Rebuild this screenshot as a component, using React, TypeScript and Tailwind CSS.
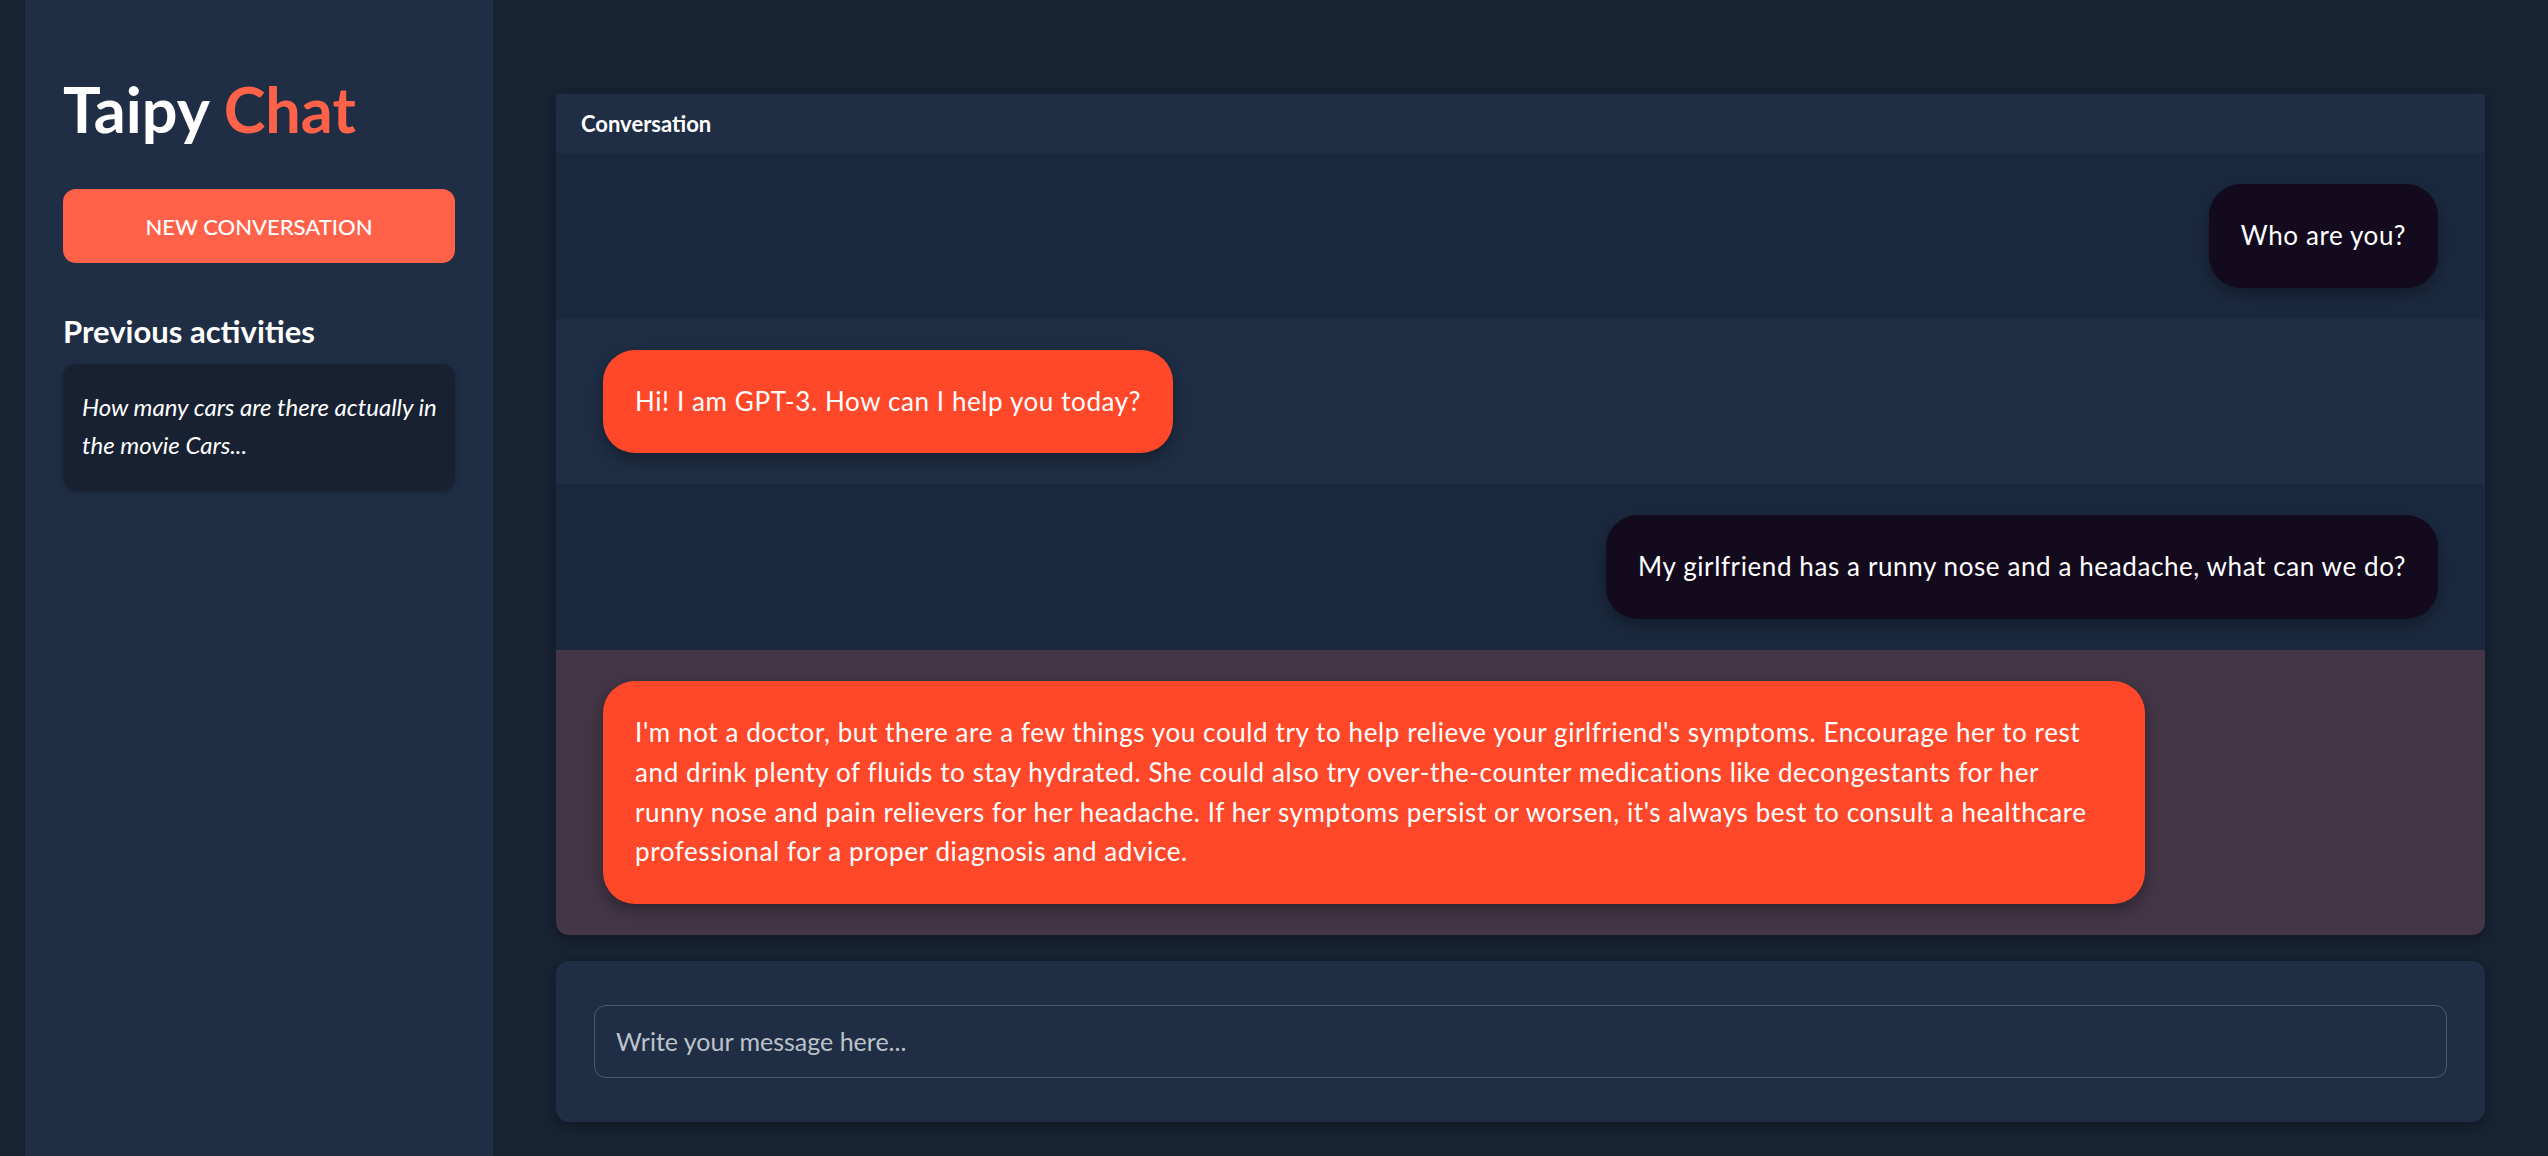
import React from "react";

type Msg = { from: "user" | "bot"; text: string; highlight?: boolean };

const messages: Msg[] = [
  { from: "user", text: "Who are you?" },
  { from: "bot", text: "Hi! I am GPT-3. How can I help you today?" },
  { from: "user", text: "My girlfriend has a runny nose and a headache, what can we do?" },
  {
    from: "bot",
    highlight: true,
    text:
      "I'm not a doctor, but there are a few things you could try to help relieve your girlfriend's symptoms. Encourage her to rest and drink plenty of fluids to stay hydrated. She could also try over-the-counter medications like decongestants for her runny nose and pain relievers for her headache. If her symptoms persist or worsen, it's always best to consult a healthcare professional for a proper diagnosis and advice.",
  },
];

function Row({ m, index }: { m: Msg; index: number }) {
  const bg = m.highlight ? "bg-[#433646]" : index % 2 === 0 ? "bg-[#1b293f]" : "bg-[#1f2e45]";
  return (
    <div className={`${bg} flex px-[47px] py-[31px] ${m.from === "user" ? "justify-end" : "justify-start"}`}>
      {m.from === "user" ? (
        <div className="rounded-[32px] bg-[#140a1e] px-[32px] py-[32px] text-[26px] leading-[39.7px] tracking-[0.6px] text-white shadow-[0_6px_16px_rgba(0,0,0,0.35)]">
          {m.text}
        </div>
      ) : (
        <div className="max-w-[1542px] rounded-[32px] bg-[#ff472a] px-[32px] py-[32px] text-[26px] leading-[39.7px] tracking-[0.6px] text-white shadow-[0_6px_16px_rgba(0,0,0,0.35)]">
          {m.text}
        </div>
      )}
    </div>
  );
}

export default function App() {
  return (
    <div className="flex h-[1156px] w-full overflow-hidden bg-[#172232] font-['Lato',sans-serif] text-white">
      <div className="w-[25px] shrink-0" />
      <aside className="flex w-[468px] shrink-0 flex-col bg-[#1f2e44] px-[38px] pt-[71px]">
        <h1 className="text-[63px] font-bold leading-[76px]">
          Taipy <span className="text-[#ff6249]">Chat</span>
        </h1>
        <button className="mt-[42px] flex h-[74px] w-full items-center justify-center rounded-[13px] bg-[#ff6249] text-[22px] font-medium uppercase text-white">
          New Conversation
        </button>
        <h2 className="mt-[51px] text-[31px] font-bold leading-[35px]">Previous activities</h2>
        <div className="mt-[15px] rounded-[13px] bg-[#172131] pb-[26px] pl-[19px] pr-[8px] pt-[24px] text-[24px] italic leading-[38px] shadow-[0_2px_6px_rgba(0,0,0,0.25)]">
          How many cars are there actually in the movie Cars...
        </div>
      </aside>
      <main className="flex min-w-0 flex-1 flex-col px-[63px] pt-[94px]">
        <section className="overflow-hidden rounded-b-[13px] shadow-[0_4px_10px_rgba(0,0,0,0.3)]">
          <div className="flex h-[59px] items-center bg-[#1f2e45] px-[25px] text-[22px] font-bold">
            Conversation
          </div>
          {messages.map((m, i) => (
            <Row key={i} m={m} index={i} />
          ))}
        </section>
        <div className="mt-[26px] rounded-[13px] bg-[#1f2e45] px-[38px] py-[44px] shadow-[0_4px_10px_rgba(0,0,0,0.3)]">
          <input
            className="h-[73px] w-full rounded-[12px] border border-[#4d5a6b] bg-transparent px-[21px] text-[25px] text-white outline-none placeholder:text-[#bcc2ca]"
            placeholder="Write your message here..."
          />
        </div>
      </main>
    </div>
  );
}
